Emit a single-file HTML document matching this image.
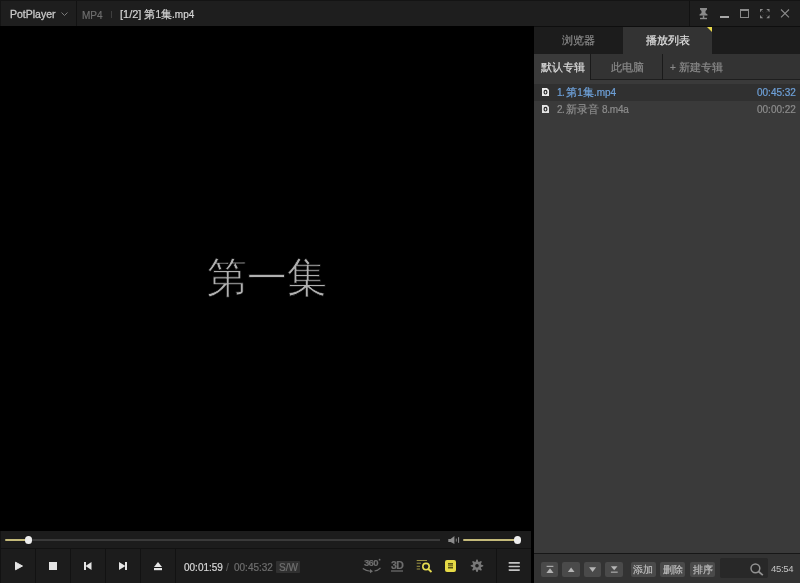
<!DOCTYPE html>
<html><head><meta charset="utf-8">
<style>
*{margin:0;padding:0;box-sizing:border-box}
html,body{width:800px;height:583px;overflow:hidden;background:#000;font-family:"Liberation Sans",sans-serif}
.a{position:absolute}
.t{position:absolute;white-space:nowrap;line-height:1;will-change:transform;-webkit-text-stroke:0.2px currentColor}
.sep{position:absolute;background:#121212}
svg{position:absolute;overflow:visible}
</style></head><body>
<!-- title bar -->
<div class="a" style="left:0;top:0;width:800px;height:26px;background:#1e1e1e;border-top:1px solid #141414;border-left:1px solid #141414"></div>
<div class="sep" style="left:76px;top:1px;width:1px;height:25px"></div>
<div class="sep" style="left:689px;top:1px;width:1px;height:25px"></div>
<div class="t" style="left:10px;top:9px;font-size:10.5px;color:#c8c8c8;-webkit-text-stroke:0.3px #c8c8c8">PotPlayer</div>
<svg style="left:61px;top:12px" width="8" height="4"><path d="M0.5 0.5L3.5 3.5L6.5 0.5" fill="none" stroke="#7a7a7a" stroke-width="1"/></svg>
<div class="t" style="left:82px;top:11px;font-size:10px;color:#6e6e6e">MP4</div>
<div class="a" style="left:111px;top:11px;width:1px;height:7px;background:#3e3e3e"></div>
<div class="t" style="left:120px;top:9px;font-size:11px;color:#d4d4d4">[1/2] 第<span style="font-size:10px">1</span>集<span style="font-size:10px">.mp4</span></div>
<!-- window buttons -->
<svg style="left:699px;top:7px" width="10" height="13"><path d="M1 1H8V2.5L6.5 4V6L8.5 7.5V8.5H0.5V7.5L2.5 6V4L1 2.5Z" fill="#8a8a8a"/><rect x="3.8" y="8.5" width="1.5" height="2.5" fill="#8a8a8a"/><rect x="1" y="10.8" width="7" height="1.4" fill="#8a8a8a"/></svg>
<div class="a" style="left:720px;top:16px;width:9px;height:2px;background:#a8a8a8"></div>
<div class="a" style="left:740px;top:9px;width:9px;height:9px;border:1px solid #8a8a8a;border-top-width:2px"></div>
<svg style="left:760px;top:9px" width="10" height="10"><g fill="#8a8a8a"><path d="M0 0H3.2L0 3.2Z"/><path d="M9.5 0H6.3L9.5 3.2Z"/><path d="M0 9.3H3.2L0 6.1Z"/><path d="M9.5 9.3H6.3L9.5 6.1Z"/></g><path d="M1.5 1.5L3.5 3.5M8 1.5L6 3.5M1.5 7.8L3.5 5.8M8 7.8L6 5.8" stroke="#404040" stroke-width="0.8"/></svg>
<svg style="left:780px;top:9px" width="10" height="9"><path d="M1 0.5L9 8.3M9 0.5L1 8.3" stroke="#8a8a8a" stroke-width="1.1"/></svg>

<!-- video -->
<div class="a" style="left:0;top:26px;width:531px;height:505px;background:#000"></div>
<div class="t" style="left:207px;top:256px;font-size:40px;color:#b0b0b0;-webkit-text-stroke:0.7px #000;transform:scaleY(1.055);transform-origin:0 0">第一集</div>

<!-- seek -->
<div class="a" style="left:0;top:531px;width:531px;height:17px;background:#1c1c1c;border-left:1px solid #121212"></div>
<div class="a" style="left:5px;top:538.8px;width:23px;height:2.4px;background:#c4ba7a;border-radius:1px"></div>
<div class="a" style="left:32px;top:539px;width:408px;height:2px;background:#3a3a3a"></div>
<div class="a" style="left:24.6px;top:536.1px;width:7.6px;height:7.6px;border-radius:50%;background:#eeeeee"></div>
<svg style="left:448px;top:535.8px" width="13" height="10"><path d="M0.3 3H2.6L6.4 0V8.1L2.6 5.9H0.3Z" fill="#8c8c8c"/><rect x="7.8" y="2.6" width="1" height="3" fill="#7a7a7a"/><rect x="10" y="1.2" width="1.1" height="5.6" fill="#8a8a8a"/></svg>
<div class="a" style="left:463px;top:538.6px;width:55px;height:2.4px;background:#c4ba7a;border-radius:1px"></div>
<div class="a" style="left:513.6px;top:536px;width:7.6px;height:7.6px;border-radius:50%;background:#eeeeee"></div>

<!-- controls -->
<div class="a" style="left:0;top:548px;width:531px;height:35px;background:#1c1c1c;border-top:1px solid #121212;border-left:1px solid #121212"></div>
<div class="sep" style="left:35px;top:549px;width:1px;height:34px"></div>
<div class="sep" style="left:70px;top:549px;width:1px;height:34px"></div>
<div class="sep" style="left:105px;top:549px;width:1px;height:34px"></div>
<div class="sep" style="left:140px;top:549px;width:1px;height:34px"></div>
<div class="sep" style="left:175px;top:549px;width:1px;height:34px"></div>
<div class="sep" style="left:496px;top:549px;width:1px;height:34px"></div>
<svg style="left:14px;top:561px" width="10" height="10"><path d="M1.5 1.2L8.5 5L1.5 8.8Z" fill="#e4e4e4" stroke="#e4e4e4" stroke-width="1" stroke-linejoin="round"/></svg>
<div class="a" style="left:49px;top:562px;width:8px;height:8px;background:#e4e4e4"></div>
<svg style="left:84px;top:562px" width="8" height="8"><rect x="0" y="0" width="2" height="8" fill="#e4e4e4"/><path d="M1.5 4L7.5 0V8Z" fill="#e4e4e4"/></svg>
<svg style="left:119px;top:562px" width="8" height="8"><rect x="6" y="0" width="2" height="8" fill="#e4e4e4"/><path d="M6.5 4L0 0V8Z" fill="#e4e4e4"/></svg>
<svg style="left:154px;top:562px" width="8" height="9"><path d="M4 0L8 5H0Z" fill="#e4e4e4"/><rect x="0" y="6" width="8" height="2.2" fill="#e4e4e4"/></svg>

<div class="t" style="left:184px;top:563px;font-size:10px;color:#d8d8d8">00:01:59</div>
<div class="t" style="left:226px;top:563px;font-size:10px;color:#5a5a5a">/</div>
<div class="t" style="left:234px;top:563px;font-size:10px;color:#6e6e6e">00:45:32</div>
<div class="a" style="left:276px;top:561px;width:24px;height:12px;background:#303030;border-radius:1px"></div>
<div class="t" style="left:279px;top:563px;font-size:10px;color:#707070">S/W</div>

<!-- right icons -->
<div class="t" style="left:363.5px;top:558.3px;font-size:9.5px;color:#6e6e6e;font-weight:bold;letter-spacing:-0.7px">360</div>
<svg style="left:362px;top:556px" width="20" height="18"><circle cx="17.6" cy="3.7" r="0.9" fill="#6e6e6e"/><path d="M0.8 12.5Q4 15 8.5 15.2M12.5 15Q16 14.5 18.5 12" fill="none" stroke="#6e6e6e" stroke-width="1.1"/><path d="M8 13L11 15.2L8 17.2Z" fill="#6e6e6e"/></svg>
<div class="t" style="left:391px;top:560px;font-size:10.5px;color:#6e6e6e;font-weight:bold;letter-spacing:-0.5px">3D</div>
<div class="a" style="left:391px;top:570px;width:12px;height:1.5px;background:#4e4e4e"></div>
<svg style="left:416px;top:559px" width="17" height="14"><g fill="#9c9242"><rect x="0.7" y="1" width="10.3" height="1"/><rect x="0.7" y="3.7" width="4.3" height="1"/><rect x="0.7" y="6.8" width="3.3" height="1"/><rect x="0.7" y="9.5" width="3.3" height="1"/></g><circle cx="10" cy="7.6" r="3.2" fill="none" stroke="#e6dc50" stroke-width="1.6"/><path d="M12.3 10L15.5 13" stroke="#e6dc50" stroke-width="1.8"/></svg>
<div class="a" style="left:445px;top:560px;width:11px;height:12px;background:#e6da46;border-radius:2px"></div>
<svg style="left:448px;top:563px" width="5" height="6"><rect x="0" y="0" width="5" height="5.5" fill="#5a5416"/><rect x="0" y="1.6" width="5" height="0.7" fill="#e6da46"/><rect x="0" y="3.3" width="5" height="0.7" fill="#e6da46"/></svg>
<svg style="left:470px;top:559px" width="14" height="14"><g transform="translate(7 6.8)"><path d="M-1.36 -3.97 L-0.57 -6.27 L0.57 -6.27 L1.36 -3.97 L1.85 -3.77 L4.04 -4.84 L4.84 -4.04 L3.77 -1.85 L3.97 -1.36 L6.27 -0.57 L6.27 0.57 L3.97 1.36 L3.77 1.85 L4.84 4.04 L4.04 4.84 L1.85 3.77 L1.36 3.97 L0.57 6.27 L-0.57 6.27 L-1.36 3.97 L-1.85 3.77 L-4.04 4.84 L-4.84 4.04 L-3.77 1.85 L-3.97 1.36 L-6.27 0.57 L-6.27 -0.57 L-3.97 -1.36 L-3.77 -1.85 L-4.84 -4.04 L-4.04 -4.84 L-1.85 -3.77Z" fill="#787878"/><circle r="1.8" fill="#1c1c1c"/></g></svg>
<svg style="left:508px;top:560px" width="13" height="12"><g fill="#c4c4c4"><rect x="0.5" y="2.1" width="11.5" height="1.7" rx="0.8"/><rect x="0.5" y="5.65" width="11.5" height="1.7" rx="0.8"/><rect x="0.5" y="9.2" width="11.5" height="1.7" rx="0.8"/></g></svg>
<div class="a" style="left:531px;top:26px;width:3px;height:557px;background:#000"></div>

<!-- panel -->
<div class="a" style="left:534px;top:26px;width:266px;height:557px;background:#3a3a3a"></div>
<div class="a" style="left:534px;top:26px;width:266px;height:1px;background:#0e0e0e"></div>
<div class="a" style="left:534px;top:27px;width:266px;height:27px;background:#1c1c1c"></div>
<div class="a" style="left:623px;top:27px;width:89px;height:27px;background:#333"></div>
<div class="a" style="left:707px;top:27px;width:0;height:0;border-top:5px solid #e8d84a;border-left:5px solid transparent"></div>
<div class="t" style="left:562px;top:35px;font-size:11px;color:#8a8a8a">浏览器</div>
<div class="t" style="left:646px;top:35px;font-size:11px;color:#e0e0e0">播放列表</div>
<div class="a" style="left:534px;top:54px;width:266px;height:26px;background:#333;border-bottom:1px solid #1e1e1e"></div>
<div class="a" style="left:534px;top:54px;width:56px;height:30px;background:#3a3a3a"></div>
<div class="a" style="left:590px;top:54px;width:1px;height:26px;background:#1a1a1a"></div>
<div class="a" style="left:662px;top:54px;width:1px;height:26px;background:#1a1a1a"></div>
<div class="t" style="left:541px;top:62px;font-size:11px;color:#dcdcdc">默认专辑</div>
<div class="t" style="left:611px;top:62px;font-size:11px;color:#8a8a8a">此电脑</div>
<div class="t" style="left:670px;top:62px;font-size:11px;color:#8a8a8a"><span style="font-size:10px">+</span> 新建专辑</div>
<div class="a" style="left:534px;top:84px;width:266px;height:16.5px;background:#303030"></div>
<svg style="left:542px;top:88px" width="7" height="8"><path d="M0 0H5L7 2V8H0Z" fill="#ececec"/><ellipse cx="3.5" cy="4.2" rx="1.4" ry="1.8" fill="none" stroke="#2a2a2a" stroke-width="1.2"/></svg>
<svg style="left:542px;top:105px" width="7" height="8"><path d="M0 0H5L7 2V8H0Z" fill="#e4e4e4"/><ellipse cx="3.5" cy="4.2" rx="1.4" ry="1.8" fill="none" stroke="#2a2a2a" stroke-width="1.2"/></svg>
<div class="t" style="left:557px;top:87px;font-size:11px;color:#6ea0d8"><span style="font-size:10px;letter-spacing:-0.6px">1. </span>第<span style="font-size:10px">1</span>集<span style="font-size:10px">.mp4</span></div>
<div class="t" style="left:557px;top:104px;font-size:11px;color:#8c8c8c"><span style="font-size:10px;letter-spacing:-0.6px">2. </span>新录音<span style="font-size:10px;letter-spacing:-0.2px"> 8.m4a</span></div>
<div class="t" style="left:757px;top:88px;font-size:10px;color:#6ea0d8">00:45:32</div>
<div class="t" style="left:757px;top:105px;font-size:10px;color:#8c8c8c">00:00:22</div>

<!-- panel toolbar -->
<div class="a" style="left:534px;top:553px;width:266px;height:1px;background:#171717"></div>
<div class="a" style="left:534px;top:554px;width:266px;height:29px;background:#333"></div>
<div class="a" style="left:541px;top:562px;width:17px;height:15px;background:#4a4a4a;border-radius:2px"></div>
<div class="a" style="left:562px;top:562px;width:17.5px;height:15px;background:#4a4a4a;border-radius:2px"></div>
<div class="a" style="left:583.7px;top:562px;width:17.3px;height:15px;background:#4a4a4a;border-radius:2px"></div>
<div class="a" style="left:605px;top:562px;width:17.5px;height:15px;background:#4a4a4a;border-radius:2px"></div>
<svg style="left:541px;top:562px" width="17" height="15"><rect x="5.6" y="3.8" width="6.8" height="1.1" fill="#b4b4b4"/><path d="M9 6.2L12.6 10.9H5.4Z" fill="#b4b4b4"/></svg>
<svg style="left:562px;top:562px" width="17" height="15"><path d="M9.15 5.6L12.5 10H5.8Z" fill="#b4b4b4"/></svg>
<svg style="left:584px;top:562px" width="17" height="15"><path d="M8.6 10L12.1 5.3H5.1Z" fill="#b4b4b4"/></svg>
<svg style="left:605px;top:562px" width="17" height="15"><path d="M9.2 8.3L12.5 4.2H5.9Z" fill="#b4b4b4"/><rect x="5.9" y="9.6" width="6.8" height="1.1" fill="#b4b4b4"/></svg>
<div class="a" style="left:630.5px;top:561.5px;width:25px;height:15px;background:#4a4a4a;border-radius:2px"></div>
<div class="a" style="left:660px;top:561.5px;width:25px;height:15px;background:#4a4a4a;border-radius:2px"></div>
<div class="a" style="left:690px;top:561.5px;width:25px;height:15px;background:#4a4a4a;border-radius:2px"></div>
<div class="t" style="left:632.5px;top:564.5px;font-size:10px;color:#bdbdbd">添加</div>
<div class="t" style="left:662.5px;top:564.5px;font-size:10px;color:#bdbdbd">删除</div>
<div class="t" style="left:692.5px;top:564.5px;font-size:10px;color:#bdbdbd">排序</div>
<div class="a" style="left:720px;top:558px;width:48px;height:20px;background:#282828;border-radius:2px"></div>
<svg style="left:750px;top:563px" width="14" height="13"><circle cx="5.4" cy="5.3" r="4.4" fill="none" stroke="#929292" stroke-width="1.5"/><path d="M8.5 8.5L12.8 12.2" stroke="#929292" stroke-width="1.7"/></svg>
<div class="t" style="left:771px;top:564.4px;font-size:9.5px;color:#c4c4c4;letter-spacing:-0.3px;-webkit-text-stroke:0">45:54</div>
</body></html>
